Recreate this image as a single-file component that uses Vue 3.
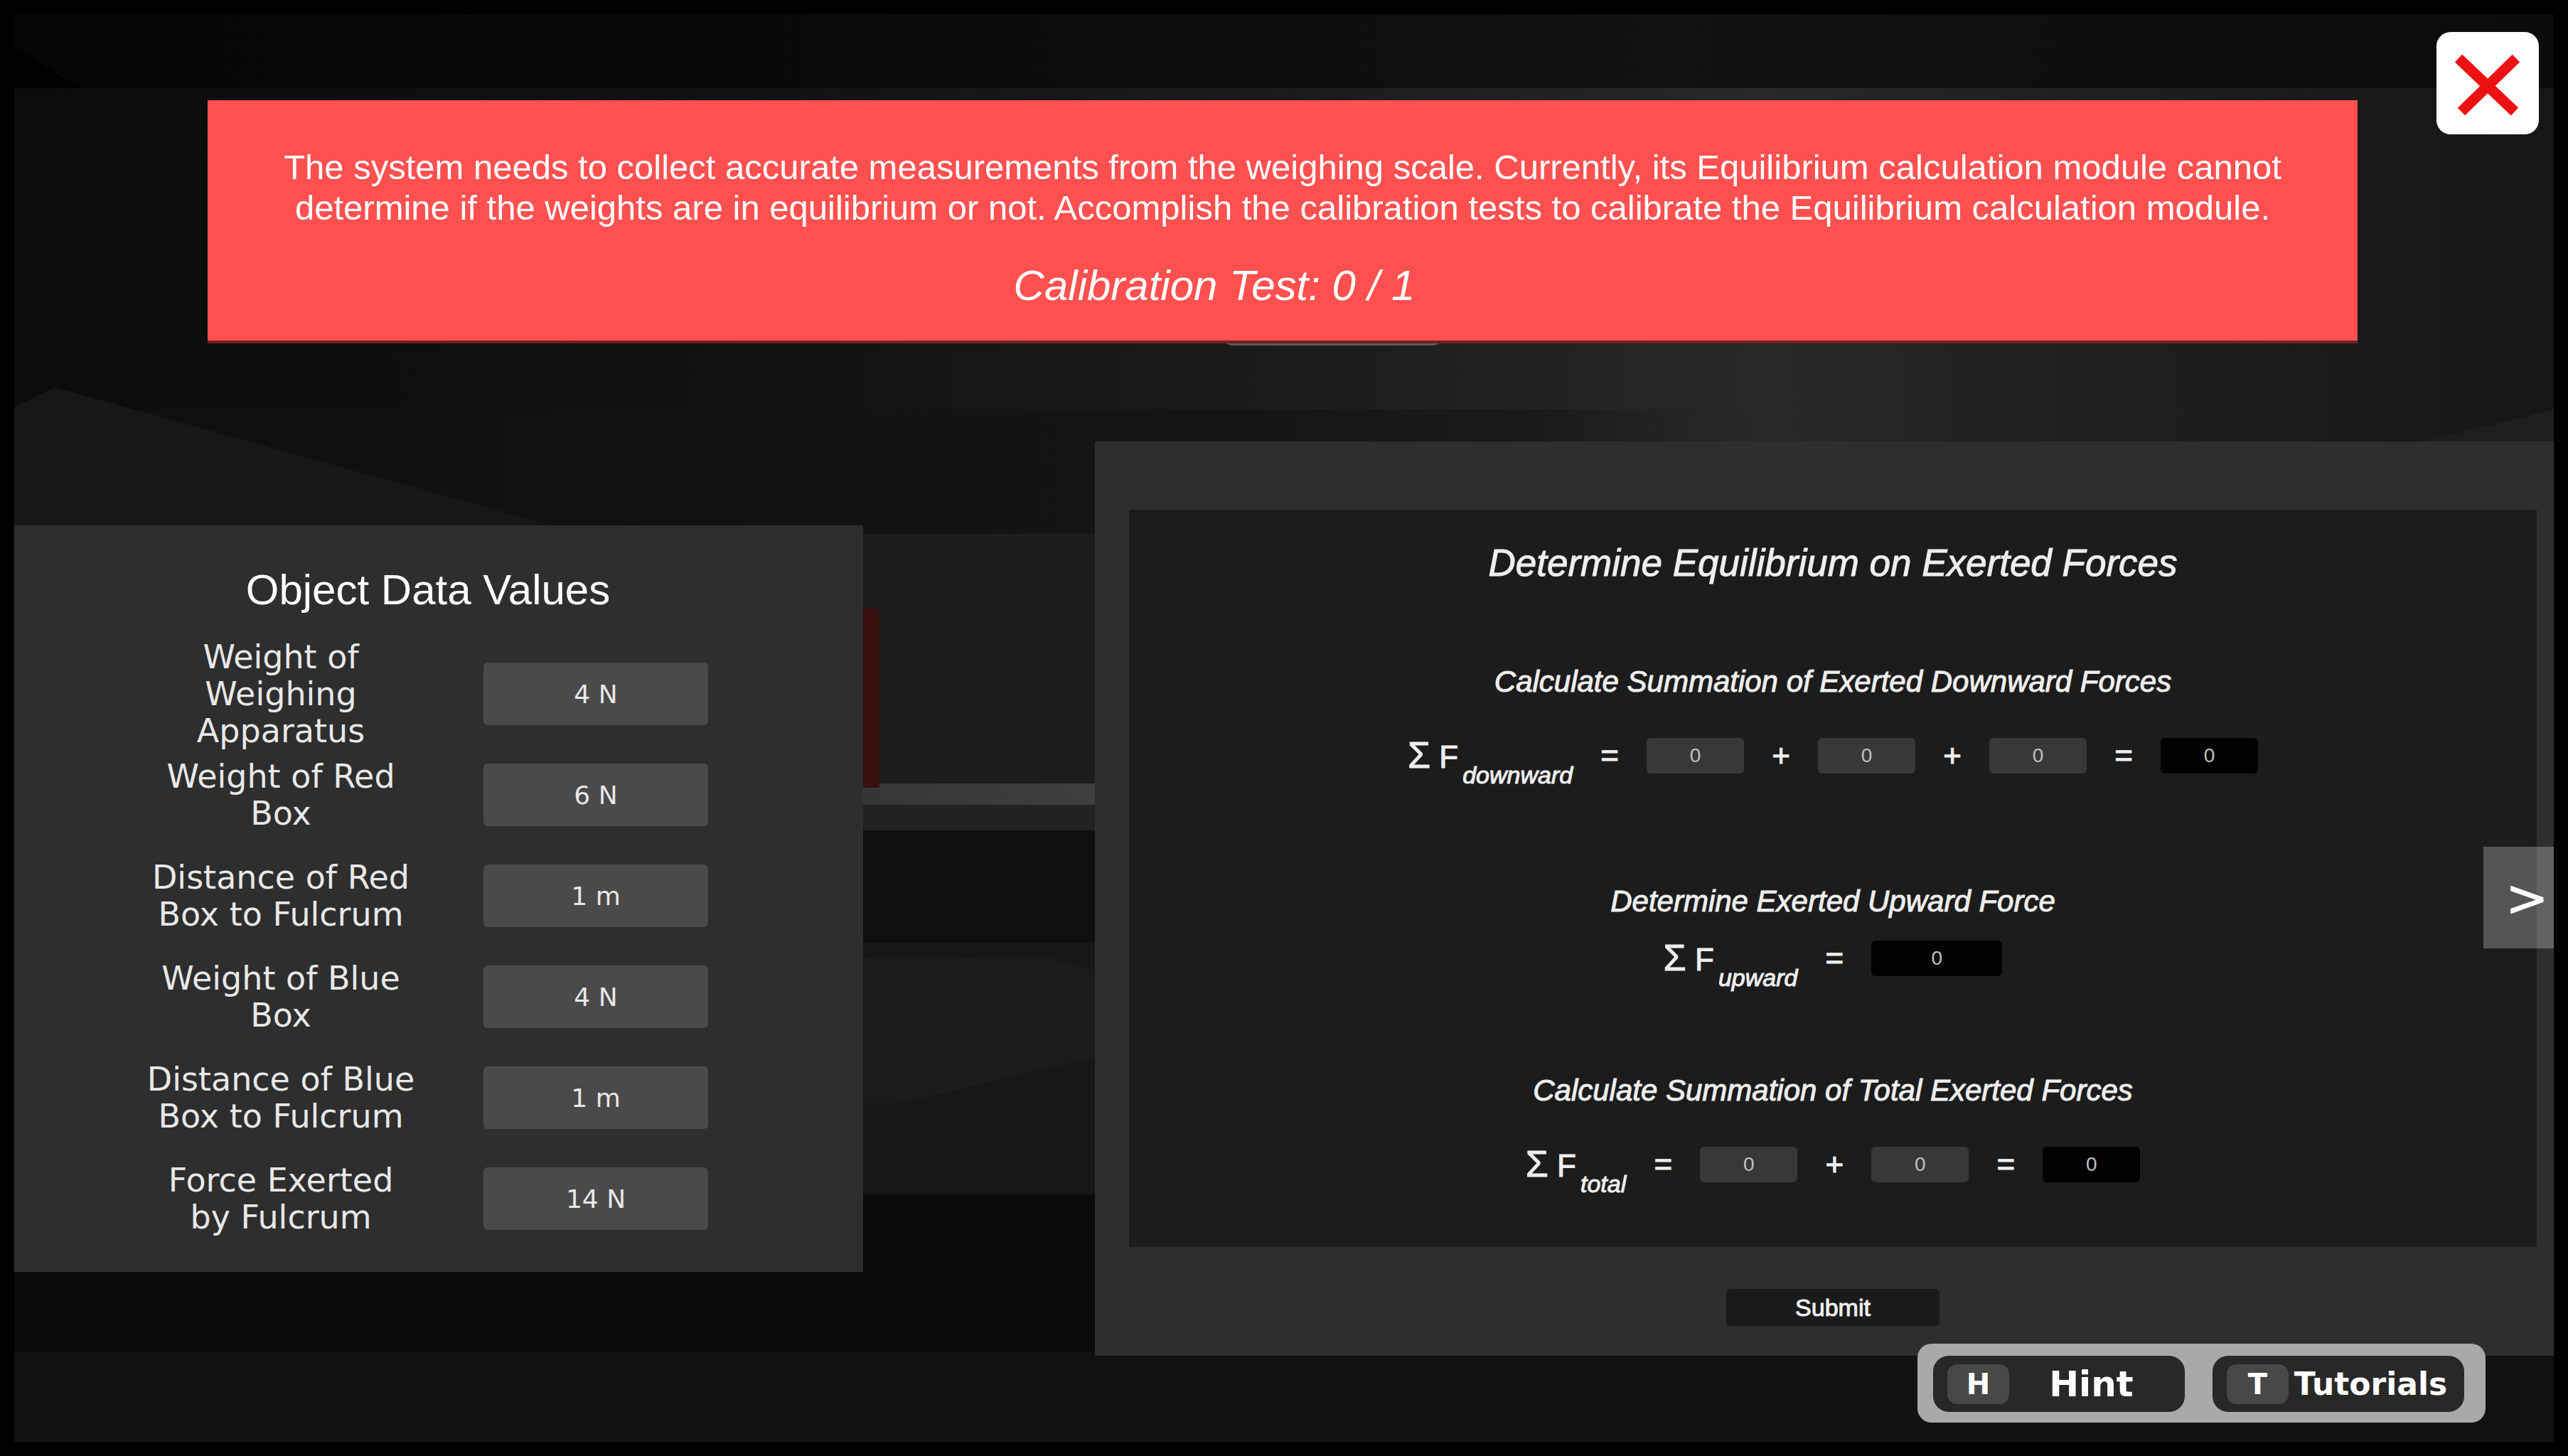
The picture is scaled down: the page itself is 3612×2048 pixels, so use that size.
<script setup>
import { ref } from 'vue'

const objectValues = [
  { id: 'apparatus', label: 'Weight of Weighing Apparatus', value: '4 N' },
  { id: 'red-weight', label: 'Weight of Red Box', value: '6 N' },
  { id: 'red-distance', label: 'Distance of Red Box to Fulcrum', value: '1 m' },
  { id: 'blue-weight', label: 'Weight of Blue Box', value: '4 N' },
  { id: 'blue-distance', label: 'Distance of Blue Box to Fulcrum', value: '1 m' },
  { id: 'fulcrum', label: 'Force Exerted by Fulcrum', value: '14 N' },
]

const downward = ref(['0', '0', '0'])
const upward = ref('0')
const total = ref(['0', '0'])
</script>

<template>
  <div class="game">
    <svg class="scene" viewBox="0 0 3572 2008" preserveAspectRatio="none" aria-hidden="true">
      <defs>
        <linearGradient id="ceiling" x1="0" x2="1" y1="0" y2="0">
          <stop offset="0" stop-color="#050505" />
          <stop offset="0.3" stop-color="#080909" />
          <stop offset="0.65" stop-color="#101111" />
          <stop offset="1" stop-color="#0b0b0b" />
        </linearGradient>
        <linearGradient id="wall" x1="0" x2="1" y1="0" y2="0">
          <stop offset="0" stop-color="#0c0c0d" />
          <stop offset="0.25" stop-color="#0f1010" />
          <stop offset="0.5" stop-color="#1b1b1b" />
          <stop offset="0.69" stop-color="#282828" />
          <stop offset="0.8" stop-color="#1f2020" />
          <stop offset="1" stop-color="#161616" />
        </linearGradient>
        <linearGradient id="ledge" x1="0" x2="1" y1="0" y2="0">
          <stop offset="0" stop-color="#0d0e0e" />
          <stop offset="0.5" stop-color="#151515" />
          <stop offset="0.6" stop-color="#1a1a1a" />
          <stop offset="0.7" stop-color="#272727" stop-opacity="0" />
        </linearGradient>
        <linearGradient id="shelf" x1="0.33" x2="0.43" y1="0" y2="0">
          <stop offset="0" stop-color="#343636" />
          <stop offset="1" stop-color="#3f3f3f" />
        </linearGradient>
      </defs>
      <rect width="3572" height="104" fill="url(#ceiling)" />
      <rect y="104" width="3572" height="627" fill="url(#wall)" />
      <path d="M0 46 L92 104 L0 104 Z" fill="#000" />
      <rect y="556" width="3572" height="175" fill="url(#ledge)" />
      <path d="M0 553 L57 525 L756 719 L756 900 L0 900 Z" fill="#161717" />
      <path d="M3390 601 L3572 556 L3572 601 Z" fill="#1d1e20" />
      <rect x="1695" y="400" width="319" height="66" rx="20" fill="#5a5b5c" />
      <rect y="731" width="3572" height="355" fill="#1c1d1d" />
      <rect y="1082" width="3572" height="30" fill="url(#shelf)" />
      <rect y="1112" width="3572" height="36" fill="#212224" />
      <rect y="1148" width="3572" height="158" fill="#0f0f0f" />
      <rect y="1306" width="3572" height="354" fill="#161616" />
      <path d="M900 1328 L1450 1326 L1520 1344 L1520 1467 L1245 1532 L900 1532 Z" fill="#1b1b1b" />
      <rect y="1660" width="3572" height="222" fill="#090a0a" />
      <rect y="1882" width="3572" height="126" fill="#111212" />
      <path d="M1150 833 L1194 833 L1217 838 L1217 1088 L1150 1088 Z" fill="#380f0f" />
    </svg>

    <header class="banner">
      <p class="briefing">The system needs to collect accurate measurements from the weighing scale. Currently, its Equilibrium calculation module cannot determine if the weights are in equilibrium or not. Accomplish the calibration tests to calibrate the Equilibrium calculation module.</p>
      <p class="progress">Calibration Test: 0 / 1</p>
    </header>

    <button class="close" type="button" aria-label="Close">
      <svg viewBox="0 0 144 144" aria-hidden="true">
        <path d="M31 37 L110 112 M112 37 L35 112" stroke="#ee1111" stroke-width="15" fill="none" />
      </svg>
    </button>

    <main class="panels">
      <section class="data">
        <h2>Object Data Values</h2>
        <div v-for="item in objectValues" :key="item.id" class="datum">
          <label :for="item.id">{{ item.label }}</label>
          <input :id="item.id" :value="item.value" type="text" readonly />
        </div>
      </section>

      <section class="calc">
        <form class="sheet" id="forces" @submit.prevent>
          <h1>Determine Equilibrium on Exerted Forces</h1>

          <h3>Calculate Summation of Exerted Downward Forces</h3>
          <div class="equation">
            <span class="symbol"><span class="sigma">Σ</span> F</span><em>downward</em>
            <span class="op">=</span>
            <input v-model="downward[0]" type="text" aria-label="First downward force" />
            <span class="op">+</span>
            <input v-model="downward[1]" type="text" aria-label="Second downward force" />
            <span class="op">+</span>
            <input v-model="downward[2]" type="text" aria-label="Third downward force" />
            <span class="op">=</span>
            <input class="result" value="0" type="text" readonly aria-label="Downward sum" />
          </div>

          <h3 class="second">Determine Exerted Upward Force</h3>
          <div class="equation close-row">
            <span class="symbol"><span class="sigma">Σ</span> F</span><em>upward</em>
            <span class="op">=</span>
            <input v-model="upward" class="result wide" type="text" aria-label="Upward force" />
          </div>

          <h3 class="third">Calculate Summation of Total Exerted Forces</h3>
          <div class="equation">
            <span class="symbol"><span class="sigma">Σ</span> F</span><em>total</em>
            <span class="op">=</span>
            <input v-model="total[0]" type="text" aria-label="Downward total" />
            <span class="op">+</span>
            <input v-model="total[1]" type="text" aria-label="Upward total" />
            <span class="op">=</span>
            <input class="result" value="0" type="text" readonly aria-label="Total force" />
          </div>
        </form>
        <button class="submit" type="submit" form="forces">Submit</button>
        <button class="next" type="button" aria-label="Next page">&gt;</button>
      </section>
    </main>

    <nav class="helpers">
      <button class="hint" type="button"><kbd>H</kbd><span>Hint</span></button>
      <button type="button"><kbd>T</kbd><span>Tutorials</span></button>
    </nav>
  </div>
</template>

<style>
body {
  margin: 0;
  background: #000;
}
</style>

<style scoped>
* {
  box-sizing: border-box;
}

.game {
  position: relative;
  margin: 20px;
  min-height: calc(100vh - 40px);
  padding-top: 121px;
  overflow: hidden;
  color: #fff;
  font-family: "Liberation Sans", Arial, sans-serif;
}

.scene {
  position: absolute;
  inset: 0;
  width: 100%;
  height: 100%;
}

h1,
h2,
h3,
p {
  margin: 0;
  font-weight: 400;
}

button,
input {
  border: 0;
  padding: 0;
  font-family: inherit;
  color: inherit;
}

.banner {
  position: relative;
  margin: 0 276px 0 272px;
  padding: 66px 80px 43px;
  background: #ff5050;
  border-bottom: 4px solid #6d2424;
  text-align: center;
}

.briefing {
  font-size: 49px;
  line-height: 57px;
}

.progress {
  margin-top: 47px;
  margin-right: 192px;
  font-size: 60px;
  line-height: 68px;
  font-style: italic;
}

.close {
  position: absolute;
  top: 25px;
  right: 21px;
  width: 144px;
  height: 144px;
  border-radius: 20px;
  background: #fff;
}

.close svg {
  display: block;
  width: 100%;
  height: 100%;
}

.panels {
  position: relative;
  display: flex;
  justify-content: space-between;
  align-items: flex-start;
  padding-top: 138px;
}

.data {
  width: 1194px;
  margin-top: 118px;
  padding: 57px 0 59px 184px;
  background: #2e2e2e;
  display: flex;
  flex-direction: column;
  gap: 54px;
}

.data h2 {
  width: 796px;
  height: 82px;
  font-size: 60px;
  line-height: 68px;
  text-align: center;
}

.datum {
  display: flex;
  align-items: center;
  gap: 94px;
  height: 88px;
  font-family: "DejaVu Sans", sans-serif;
  color: #e8e8e8;
}

.datum label {
  width: 382px;
  font-size: 46px;
  line-height: 52px;
  text-align: center;
}

.datum input {
  width: 316px;
  height: 88px;
  border-radius: 6px;
  background: #4a4a4a;
  font-size: 36px;
  text-align: center;
}

.calc {
  position: relative;
  width: 2052px;
  padding: 96px 24px 42px 48px;
  background: #2e2e2e;
  text-align: center;
}

.sheet {
  padding: 45px 0 91px;
  background: #1c1c1c;
  color: #eee;
}

.sheet h1 {
  font-size: 53px;
  line-height: 60px;
  font-style: italic;
  -webkit-text-stroke: 1px;
}

.sheet h3 {
  margin-top: 112px;
  font-size: 42px;
  line-height: 50px;
  font-style: italic;
  -webkit-text-stroke: 1px;
}

.sheet h3.second {
  margin-top: 155px;
}

.sheet h3.third {
  margin-top: 136px;
}

.equation {
  display: flex;
  justify-content: center;
  align-items: center;
  margin-top: 54px;
  height: 50px;
}

.close-row {
  margin-top: 30px;
}

.symbol,
.op {
  font-size: 44px;
  line-height: 50px;
  -webkit-text-stroke: 1px;
}

.sigma {
  font-size: 52px;
}

.equation em {
  margin-left: 6px;
  padding-top: 54px;
  font-size: 34px;
  line-height: 40px;
  -webkit-text-stroke: 1px;
}

.op {
  width: 104px;
}

.equation input {
  width: 137px;
  height: 50px;
  border-radius: 6px;
  background: #383838;
  color: #c0c0c0;
  font-size: 28px;
  text-align: center;
}

.equation .result {
  background: #000;
}

.equation .wide {
  width: 184px;
}

.submit {
  width: 300px;
  height: 52px;
  margin-top: 59px;
  border-radius: 6px;
  background: #1a1a1a;
  color: #eee;
  font-size: 34px;
  -webkit-text-stroke: 1px;
}

.next {
  position: absolute;
  top: 570px;
  right: 0;
  width: 99px;
  height: 143px;
  padding-left: 24px;
  background: rgba(255, 255, 255, 0.25);
  font-family: "DejaVu Sans", sans-serif;
  font-size: 72px;
  -webkit-text-stroke: 1px;
}

.helpers {
  position: absolute;
  right: 96px;
  bottom: 27px;
  display: flex;
  gap: 39px;
  padding: 17px 30px 15px 22px;
  border-radius: 20px;
  background: #a9a9a9;
}

.helpers button {
  display: flex;
  align-items: center;
  width: 354px;
  height: 79px;
  padding: 0 16px 0 20px;
  border-radius: 22px;
  background: #282828;
  font-family: "DejaVu Sans", sans-serif;
  font-size: 44px;
  font-weight: 700;
}

.helpers kbd {
  width: 87px;
  height: 56px;
  border-radius: 14px;
  background: #484848;
  font-family: inherit;
  font-size: 40px;
  line-height: 56px;
}

.helpers span {
  flex: 1;
}

.helpers .hint {
  font-size: 50px;
}
</style>
